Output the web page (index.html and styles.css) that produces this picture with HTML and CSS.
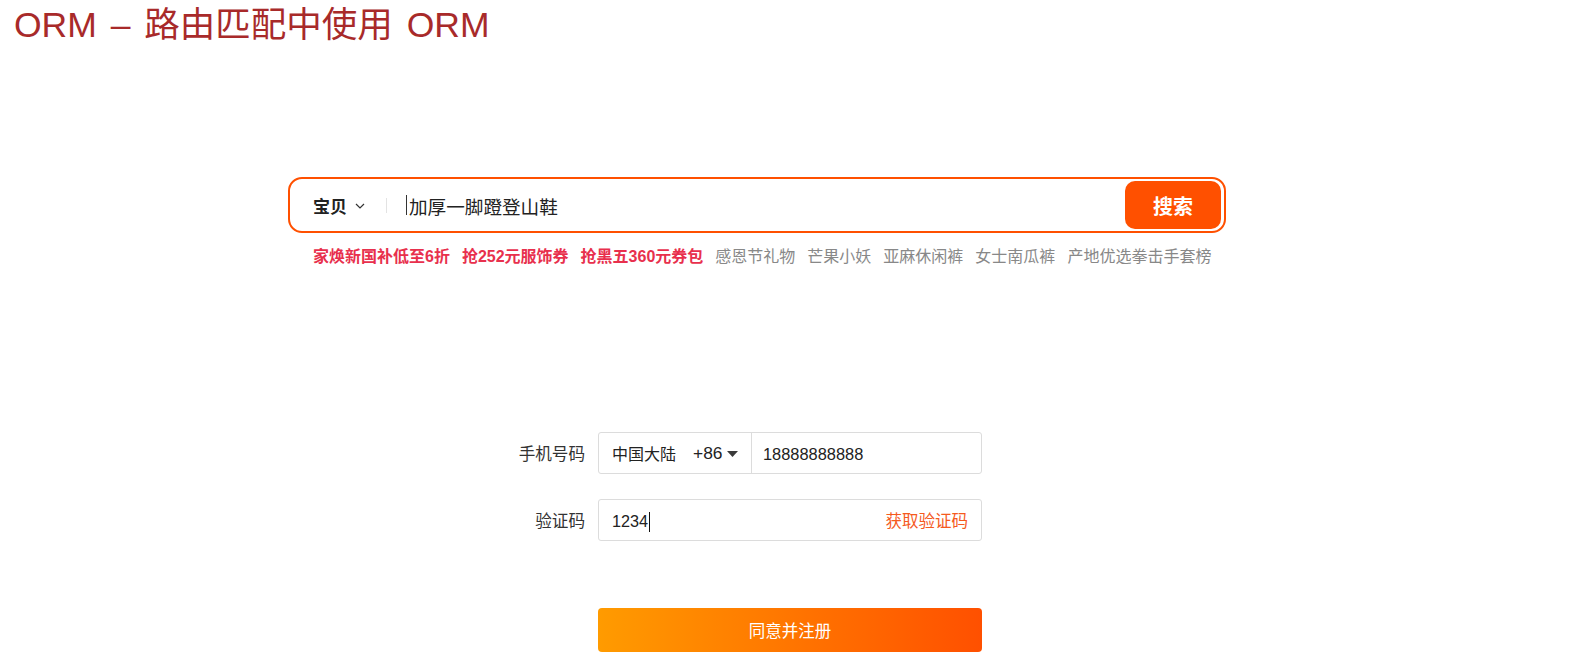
FILE: index.html
```html
<!DOCTYPE html>
<html lang="zh-CN">
<head>
<meta charset="utf-8">
<title>ORM - 路由匹配中使用 ORM</title>
<link rel="stylesheet" href="styles.css">
</head>
<body>
  <h1 class="title">ORM – 路由匹配中使用 ORM</h1>

  <section class="search">
    <div class="search-box">
      <div class="search-type">
        <span class="search-type-label">宝贝</span>
        <svg class="chevron" width="10" height="6" viewBox="0 0 10 6"><path d="M1 1 L5 5 L9 1" fill="none" stroke="#333" stroke-width="1.2"/></svg>
      </div>
      <span class="search-divider"></span>
      <div class="search-input">
        <span class="caret"></span><span class="search-text">加厚一脚蹬登山鞋</span>
      </div>
      <button class="search-btn">搜索</button>
    </div>
    <ul class="hot-words">
      <li class="hot">家焕新国补低至6折</li>
      <li class="hot">抢252元服饰券</li>
      <li class="hot">抢黑五360元券包</li>
      <li>感恩节礼物</li>
      <li>芒果小妖</li>
      <li>亚麻休闲裤</li>
      <li>女士南瓜裤</li>
      <li>产地优选拳击手套榜</li>
    </ul>
  </section>

  <form class="register">
    <label class="field-label">手机号码</label>
    <div class="field phone-field">
      <div class="country">
        <span class="country-name">中国大陆</span>
        <span class="country-code">+86</span>
        <svg class="tri" width="11" height="6" viewBox="0 0 11 6"><polygon points="0,0 11,0 5.5,6" fill="#3a3a3a"/></svg>
      </div>
      <div class="phone-value">18888888888</div>
    </div>

    <label class="field-label">验证码</label>
    <div class="field code-field">
      <span class="code-value">1234</span><span class="caret small"></span>
      <span class="get-code">获取验证码</span>
    </div>

    <span class="spacer"></span>
    <button type="button" class="submit">同意并注册</button>
  </form>
</body>
</html>
```
FILE: styles.css
```css
* { box-sizing: border-box; }

body {
  margin: 0;
  background: #fff;
  font-family: "Liberation Sans", "Noto Sans CJK SC", sans-serif;
  color: #333;
}

.title {
  margin: 0;
  padding: 5px 0 0 14px;
  font-size: 35.5px;
  line-height: 40px;
  font-weight: normal;
  word-spacing: 4px;
  color: #a82a2a;
}

/* ---------- search ---------- */
.search {
  margin: 132px 0 0 288px;
  width: 938px;
}

.search-box {
  display: flex;
  align-items: center;
  height: 56px;
  border: 2px solid #ff5000;
  border-radius: 14px;
  padding: 0 3px 0 23px;
}

.search-type {
  display: flex;
  align-items: center;
  gap: 8px;
}

.search-type-label {
  font-size: 17px;
  font-weight: bold;
  color: #222;
}

.chevron { margin-top: 2px; }

.search-divider {
  width: 1px;
  height: 15px;
  background: #e3e3e3;
  margin-left: 21px;
}

.search-input {
  display: flex;
  align-items: center;
  margin-left: 19px;
  flex: 1;
}

.caret {
  width: 1px;
  height: 20px;
  background: #333;
  margin-right: 2px;
}

.search-text {
  font-size: 18.6px;
  color: #222;
}

.search-btn {
  width: 96px;
  height: 48px;
  border: 0;
  border-radius: 10px;
  background: #ff5000;
  color: #fff;
  font-family: inherit;
  font-size: 20px;
  font-weight: bold;
  padding: 0;
}

.hot-words {
  list-style: none;
  margin: 13px 0 0;
  padding: 0 0 0 25px;
  display: flex;
  gap: 12px;
  font-size: 16px;
  line-height: 22px;
  color: #888;
}

.hot-words .hot {
  color: #e8304d;
  font-weight: bold;
}

/* ---------- register form ---------- */
.register {
  margin: 164px 0 0 498px;
  display: grid;
  grid-template-columns: 87px 384px;
  column-gap: 13px;
  row-gap: 25px;
  align-items: center;
}

.field-label {
  text-align: right;
  font-size: 16.6px;
  color: #333;
}

.field {
  height: 42px;
  border: 1px solid #dcdcdc;
  border-radius: 3px;
  display: flex;
  align-items: center;
  font-size: 16px;
  color: #222;
}

.country {
  width: 153px;
  height: 100%;
  border-right: 1px solid #dcdcdc;
  display: flex;
  align-items: center;
  padding-left: 13px;
}

.country-name { font-size: 16px; }

.country-code {
  margin-left: 17px;
  padding-top: 1px;
  font-size: 17.4px;
}

.tri { margin-left: 4px; margin-top: 2px; }

.phone-value {
  padding: 3px 0 0 11px;
  font-size: 16.4px;
}

.code-field { padding: 0 13px 0 13px; }

.code-value {
  padding-top: 3px;
  font-size: 16.2px;
}

.caret.small {
  height: 20px;
  margin: 4px 0 0 1px;
  background: #111;
}

.get-code {
  margin-left: auto;
  color: #f55a1e;
  font-size: 16.5px;
}

.spacer { grid-column: 1; }

.submit {
  grid-column: 2;
  margin-top: 42px;
  height: 44px;
  border: 0;
  border-radius: 4px;
  background: linear-gradient(90deg, #ff9b00, #ff5000);
  color: #fff;
  font-family: inherit;
  font-size: 16.5px;
  padding: 0;
}
```
